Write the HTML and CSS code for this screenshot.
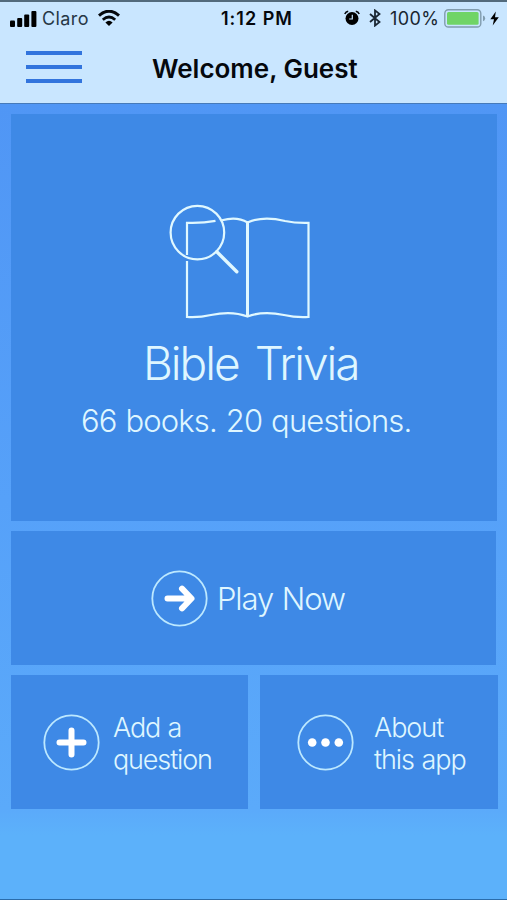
FILE: index.html
```
<!DOCTYPE html>
<html lang="en">
<head>
    <meta charset="UTF-8">
    <meta name="viewport" content="width=device-width, initial-scale=1.0">
    <title>Bible Trivia</title>
    <link rel="stylesheet" href="styles.css">
</head>
<body>
    <div class="app">
        <header class="header">
            <div class="status-bar">
                <div class="status-left">
                    <svg class="signal" width="27" height="17" viewBox="0 0 27 17">
                        <rect x="0" y="10.5" width="5" height="6.5" rx="1"/>
                        <rect x="7.2" y="8" width="5" height="9" rx="1"/>
                        <rect x="14.2" y="4.5" width="5" height="12.5" rx="1"/>
                        <rect x="21.4" y="1" width="5" height="16" rx="1"/>
                    </svg>
                    <span class="carrier">Claro</span>
                    <svg class="wifi" width="22" height="16" viewBox="0 0 22 16">
                        <path d="M1 5.6 Q11 -3.2 21 5.6" fill="none" stroke="#05080d" stroke-width="3"/>
                        <path d="M4.8 9.7 Q11 4.4 17.2 9.7" fill="none" stroke="#05080d" stroke-width="2.8"/>
                        <path d="M7.4 12.4 Q11 9 14.6 12.4 L11 16 Z"/>
                    </svg>
                </div>
                <div class="clock">1:12 PM</div>
                <div class="status-right">
                    <svg class="alarm" width="16" height="16" viewBox="0 0 16 16">
                        <circle cx="8" cy="8.5" r="6.5"/>
                        <path d="M0.8 4 Q1.8 1.7 4.2 1.2 M15.2 4 Q14.2 1.7 11.8 1.2" fill="none" stroke="#05080d" stroke-width="1.6"/>
                        <path d="M8.3 4.8 V9 H5.2" fill="none" stroke="#c9e6ff" stroke-width="1.2"/>
                    </svg>
                    <svg class="bluetooth" width="12" height="18" viewBox="0 0 12 18">
                        <path d="M1 5 L10.5 13 L6 16.6 V1.4 L10.5 5 L1 13" fill="none" stroke="#1b2733" stroke-width="1.8"/>
                    </svg>
                    <span class="percent">100%</span>
                    <svg class="battery" width="42" height="19" viewBox="0 0 42 19">
                        <rect x="0.8" y="0.8" width="36" height="17.2" rx="3.6" fill="none" stroke="#819cae" stroke-width="1.4"/>
                        <rect x="3" y="3" width="31.6" height="12.8" rx="1.5" fill="#70d466"/>
                        <path d="M39 6.5 Q41.2 7.2 41.2 9.4 Q41.2 11.6 39 12.3 Z" fill="#819cae"/>
                    </svg>
                    <svg class="bolt" width="9" height="15" viewBox="0 0 9 15">
                        <path d="M5.8 0.5 L0.3 8.3 H4 L2.7 14.5 L8.8 6.2 H5 Z"/>
                    </svg>
                </div>
            </div>
            <div class="nav-bar">
                <div class="menu-btn">
                    <span class="menu-line"></span>
                    <span class="menu-line"></span>
                    <span class="menu-line"></span>
                </div>
                <h1 class="title">Welcome, Guest</h1>
            </div>
        </header>

        <main class="tiles">
            <section class="tile hero">
                <svg class="book" width="142" height="117" viewBox="0 0 142 117">
                    <!-- pages -->
                    <path d="M18 51 V18.8 Q33 19.4 46.5 16.8 M53 16.3 Q68 12.2 78.5 18.5 Q94 11.5 116 17 Q127 19.2 139.5 18.8 V113 Q127 113.8 115 111 Q94 106.5 78.5 112.5 Q63 106.5 42 111 Q30 113.8 18 113 V57"/>
                    <path class="spine" d="M78.5 18.5 V112.5"/>
                    <!-- magnifier -->
                    <circle cx="28.4" cy="28.6" r="26.8"/>
                    <path class="handle" d="M47.8 47.8 L67.8 67.8"/>
                </svg>
                <h2 class="hero-title">Bible Trivia</h2>
                <p class="hero-text">66 books. 20 questions.</p>
            </section>

            <section class="tile play">
                <svg class="circle-icon" width="57" height="57" viewBox="0 0 57 57">
                    <circle class="ring" cx="28.5" cy="28.5" r="27.2"/>
                    <path class="bold" d="M16.5 28.5 H39 M31 18.7 L40.5 28.5 L31 38.3"/>
                </svg>
                <span class="play-label">Play Now</span>
            </section>

            <div class="tile-row">
                <section class="tile small add">
                    <svg class="circle-icon" width="57" height="57" viewBox="0 0 57 57">
                        <circle class="ring" cx="28.5" cy="28.5" r="27.2"/>
                        <path class="bold" d="M16.5 28.5 H40.5 M28.5 16.5 V40.5"/>
                    </svg>
                    <span class="small-label add-label">Add a<br>question</span>
                </section>
                <section class="tile small about">
                    <svg class="circle-icon" width="57" height="57" viewBox="0 0 57 57">
                        <circle class="ring" cx="28.5" cy="28.5" r="27.2"/>
                        <g fill="#fff">
                            <circle cx="15.2" cy="28.5" r="4.3"/>
                            <circle cx="28.5" cy="28.5" r="4.3"/>
                            <circle cx="41.8" cy="28.5" r="4.3"/>
                        </g>
                    </svg>
                    <span class="small-label about-label">About<br>this app</span>
                </section>
            </div>
        </main>
    </div>
</body>
</html>
```
FILE: styles.css
```
* {
    box-sizing: border-box;
}
body {
    margin: 0;
    font-family: Inter, "Liberation Sans", sans-serif;
    color: #05080d;
}
svg {
    display: block;
    flex: none;
}
.app {
    height: 900px;
    overflow: hidden;
    background: linear-gradient(#5096f5 103px, #56a1f9 500px, #5baafa 810px, #5cb1fa 835px);
    border-bottom: 1px solid #2a6caa;
}
.header {
    height: 104px;
    background: #c9e6ff;
    border-top: 2px solid #526a7c;
    border-bottom: 1px solid #467aba;
}
.status-bar {
    display: grid;
    grid-template-columns: 221px 1fr 163px;
    height: 32px;
    align-items: center;
    white-space: nowrap;
}
.status-left,
.status-right {
    display: flex;
    align-items: center;
}
.status-left {
    padding-left: 10px;
}
.carrier {
    width: 56px;
    margin-left: 5px;
    font-size: 18px;
    letter-spacing: 0.4px;
    color: #263746;
}
.clock {
    font-size: 18px;
    font-weight: 600;
    letter-spacing: 1px;
}
.bluetooth {
    margin-left: 9px;
}
.percent {
    width: 54px;
    margin-left: 9px;
    font-size: 18px;
    letter-spacing: 0.4px;
    color: #182530;
}
.bolt {
    margin-left: 4px;
}
.nav-bar {
    display: flex;
    align-items: center;
    height: 66px;
    padding-left: 26px;
}
.menu-btn {
    display: flex;
    flex-direction: column;
    gap: 10px;
    width: 56px;
}
.menu-line {
    height: 4px;
    background: #3274dd;
}
.title {
    margin: 2px 0 0 70px;
    font-size: 26px;
    font-weight: 600;
    white-space: nowrap;
}
.tiles {
    display: flex;
    flex-direction: column;
    gap: 10px;
    padding: 10px 10px 0 11px;
}
.tile {
    background: #3e89e6;
    color: #dff6ff;
    font-weight: 300;
    white-space: nowrap;
}
.hero {
    height: 407px;
    padding: 90px 0 0 70px;
}
.book {
    margin-left: 88px;
    fill: none;
    stroke: #e0f8ff;
    stroke-width: 2.2;
}
.spine {
    stroke-width: 3;
}
.handle {
    stroke-width: 3.4;
    stroke-linecap: round;
}
.hero-title {
    margin: 14px 0 0 62px;
    font-size: 46px;
    font-weight: 300;
    line-height: 56px;
    letter-spacing: -2px;
    word-spacing: 5px;
}
.hero-text {
    margin: 11px 0 0;
    font-size: 31px;
    line-height: 38px;
    letter-spacing: -0.85px;
    word-spacing: 1px;
}
.play {
    display: flex;
    align-items: center;
    width: 485px;
    height: 134px;
    padding-left: 140px;
}
.play-label {
    margin-left: 9px;
    font-size: 31px;
    letter-spacing: -1.1px;
    word-spacing: 1px;
}
.ring {
    fill: none;
    stroke: #bce8ff;
    stroke-width: 1.8;
}
.bold {
    fill: none;
    stroke: #fff;
    stroke-width: 6;
    stroke-linecap: round;
    stroke-linejoin: round;
}
.tile-row {
    display: grid;
    grid-template-columns: 237px 238px;
    gap: 12px;
}
.small {
    display: flex;
    align-items: center;
    height: 134px;
}
.add {
    padding-left: 32px;
}
.about {
    padding-left: 37px;
}
.small-label {
    font-size: 27px;
    line-height: 32px;
    margin-top: 3px;
    word-spacing: 1px;
}
.add-label {
    margin-left: 13px;
    letter-spacing: -1.15px;
}
.about-label {
    margin-left: 20px;
    letter-spacing: -1.05px;
}
```
